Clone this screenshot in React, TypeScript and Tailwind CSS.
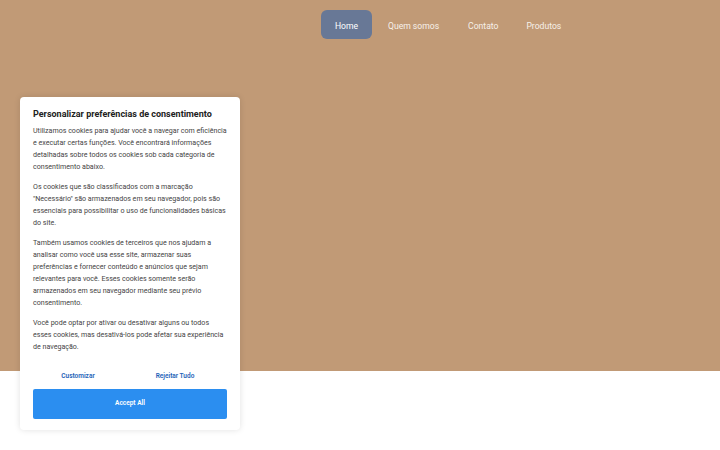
import React from "react";

export default function App() {
  return (
    <div className="w-[720px] h-[450px] bg-white relative overflow-hidden" style={{ fontFamily: "Roboto, 'Liberation Sans', sans-serif" }}>
      <div className="h-[371px] bg-[#c19a76]">
        <nav className="flex items-center pt-[10px] pl-[321px] text-[8.6px] leading-[12px] text-[#f7f1ea]">
          <a className="h-[29px] w-[51px] rounded-[6px] bg-[#687896] text-white flex items-center justify-center pt-[2px]">Home</a>
          <a className="ml-[16px] pt-[2px]">Quem somos</a>
          <a className="ml-[29px] pt-[2px]">Contato</a>
          <a className="ml-[28px] pt-[2px]">Produtos</a>
        </nav>
      </div>
      <div className="absolute left-[20px] top-[97px] w-[220px] bg-white rounded-[4px] shadow-[0_0_6px_rgba(0,0,0,0.12)] px-[13px] pt-[10px] pb-[11px]">
        <h2 className="text-[9px] font-bold text-[#212121] leading-[14px] mb-[4px]">Personalizar preferências de consentimento</h2>
        <div className="text-[7.1px] leading-[12px] text-[#444]">
          <p>Utilizamos cookies para ajudar você a navegar com eficiência e executar certas funções. Você encontrará informações detalhadas sobre todos os cookies sob cada categoria de consentimento abaixo.</p>
          <p className="mt-[8px]">Os cookies que são classificados com a marcação "Necessário" são armazenados em seu navegador, pois são essenciais para possibilitar o uso de funcionalidades básicas do site.</p>
          <p className="mt-[8px]">Também usamos cookies de terceiros que nos ajudam a analisar como você usa esse site, armazenar suas preferências e fornecer conteúdo e anúncios que sejam relevantes para você. Esses cookies somente serão armazenados em seu navegador mediante seu prévio consentimento.</p>
          <p className="mt-[8px]">Você pode optar por ativar ou desativar alguns ou todos esses cookies, mas desativá-los pode afetar sua experiência de navegação.</p>
        </div>
        <div className="flex mt-[14px] h-[20px] items-center text-[6.5px] font-semibold text-[#1e63b8]">
          <div className="w-[90px] text-center">Customizar</div>
          <div className="w-[104px] text-center">Rejeitar Tudo</div>
        </div>
        <button className="mt-[2px] w-full h-[30px] rounded-[2px] bg-[#2b8ef0] text-white text-[6.5px] font-semibold">Accept All</button>
      </div>
    </div>
  );
}
